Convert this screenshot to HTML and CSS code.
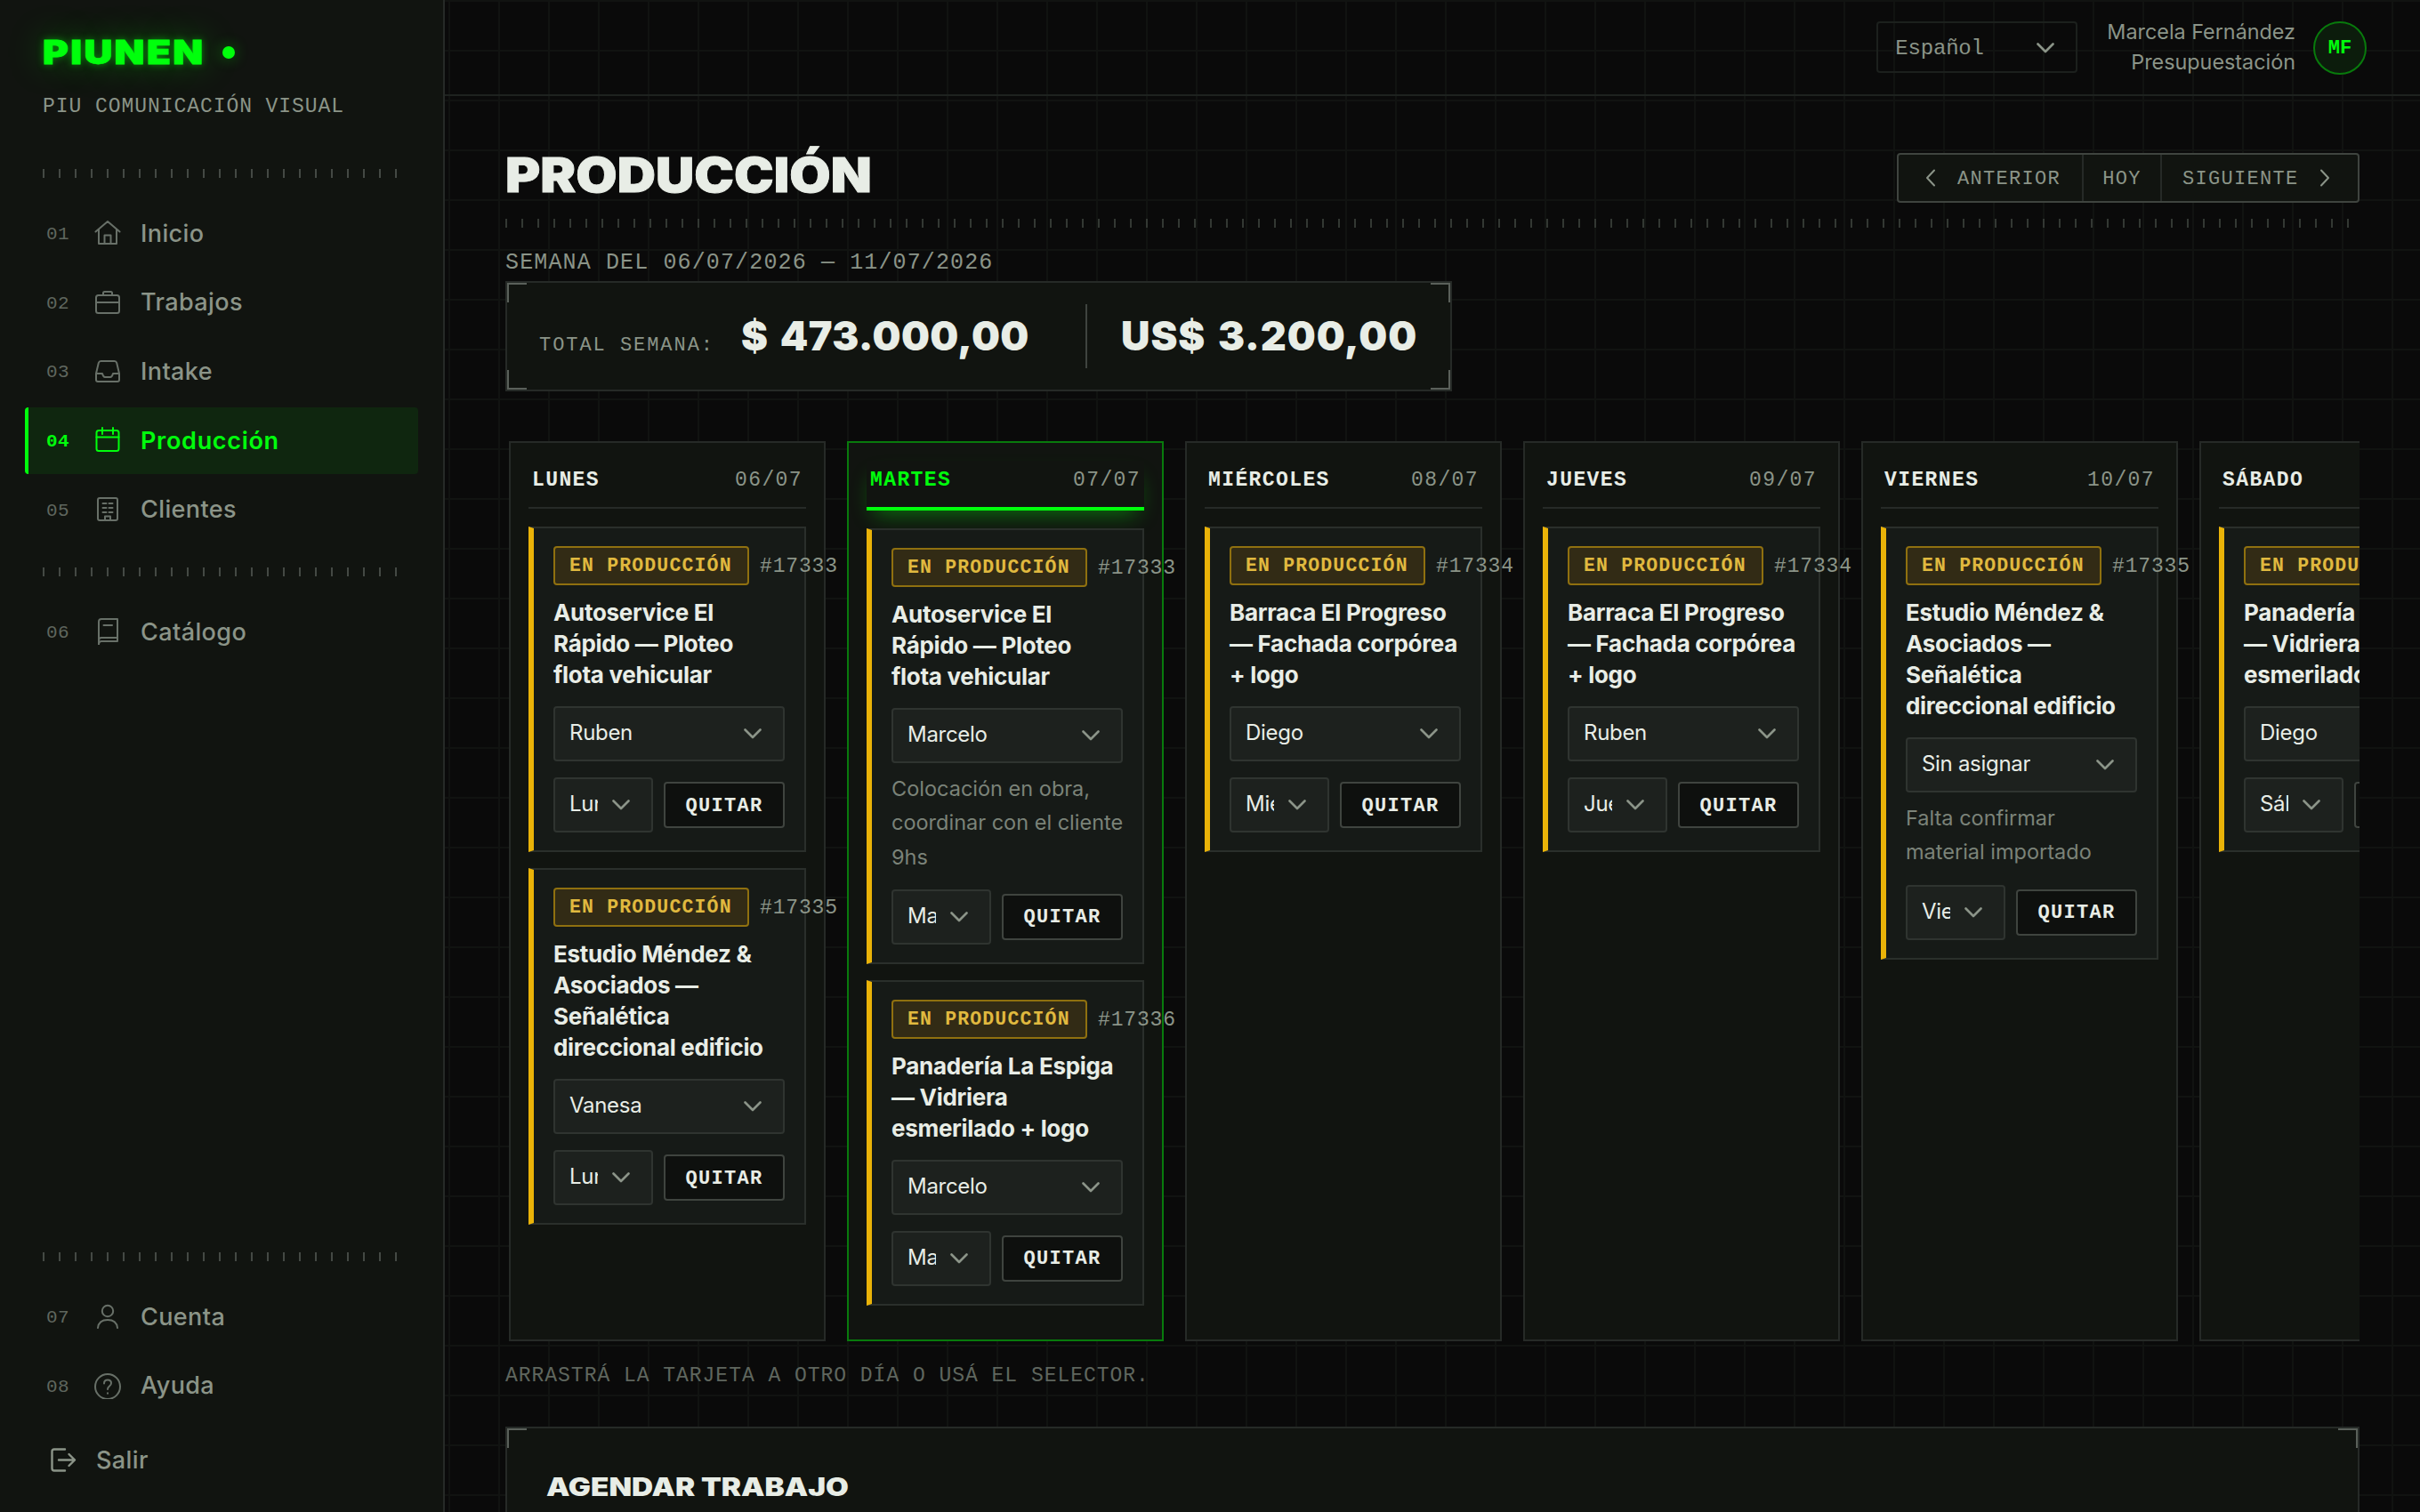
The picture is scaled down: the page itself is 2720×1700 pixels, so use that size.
FILE: index.html
```html
<!DOCTYPE html>
<html lang="es">
<head>
  <meta charset="utf-8">
  <title>Producción</title>
  <link rel="stylesheet" href="styles.css">
</head>
<body>
<svg class="defs" width="0" height="0">
  <symbol id="chev" viewBox="0 0 20 12"><path d="M1.5 1.5 10 10l8.500-8.500"/></symbol>
</svg>

<aside class="sidebar">
  <div class="brand"><span class="brand-name">PIUNEN</span><span class="dot"></span></div>
  <div class="brand-sub">PIU COMUNICACIÓN VISUAL</div>
  <div class="ruler"></div>
  <nav>
    <a class="item"><span class="num">01</span>
      <svg class="ico" viewBox="0 0 30 30"><path d="M1.500 13.500 15 2l13.500 11.500M5 11v16h20V11M11.500 27V17.500h7V27"/></svg>Inicio</a>
    <a class="item"><span class="num">02</span>
      <svg class="ico" viewBox="0 0 30 30"><rect x="2" y="7" width="26" height="20" rx="2.500"/><path d="M10 7V4.500Q10 3 11.500 3h7Q20 3 20 4.500V7M2 15h26"/></svg>Trabajos</a>
    <a class="item"><span class="num">03</span>
      <svg class="ico" viewBox="0 0 30 30"><path d="M2 18 4.800 6Q5.400 4 7.500 4h15Q24.600 4 25.200 6L28 18v7q0 2-2 2H4q-2 0-2-2zM2 18h7q1 4 3 4h6q2 0 3-4h7"/></svg>Intake</a>
    <a class="item active"><span class="num">04</span>
      <svg class="ico" viewBox="0 0 30 30"><rect x="2.500" y="4" width="25" height="23" rx="2.500"/><path d="M2.500 11.500h25M9 1v7M21 1v7"/></svg>Producción</a>
    <a class="item"><span class="num">05</span>
      <svg class="ico" viewBox="0 0 30 30"><rect x="4" y="2" width="22" height="25" rx="2"/><path d="M9.500 8h4M16.500 8h4M9.500 13h4M16.500 13h4M9.500 18h4M16.500 18h4M12 27v-4.500h6V27"/></svg>Clientes</a>
  </nav>
  <div class="ruler"></div>
  <nav>
    <a class="item"><span class="num">06</span>
      <svg class="ico" viewBox="0 0 30 30"><path d="M5 30V4q0-3 3-3h18v25H8q-3 0-3 4M5 25q0-3 3-3h18M10.500 8H20"/></svg>Catálogo</a>
  </nav>
  <div class="spacer"></div>
  <div class="ruler"></div>
  <nav>
    <a class="item"><span class="num">07</span>
      <svg class="ico" viewBox="0 0 30 30"><circle cx="15" cy="9" r="6.200"/><path d="M4 28q1-9 11-9t11 9"/></svg>Cuenta</a>
    <a class="item"><span class="num">08</span>
      <svg class="ico" viewBox="0 0 30 30"><circle cx="15" cy="16" r="14"/><path d="M11 12.500q0-4 4-4t4 3.500q0 2-2 3.500t-2 3.500M15 23.200v.6"/></svg>Ayuda</a>
    <a class="item logout">
      <svg class="ico" viewBox="0 0 30 30"><path d="M17 2.500H5Q2.500 2.500 2.500 5v19q0 2.500 2.500 2.500h12M10 14.500h18M21.500 8l6.500 6.500-6.500 6.500"/></svg>Salir</a>
  </nav>
</aside>

<div class="page">
  <header class="topbar">
    <div class="lang">Español<svg class="chev"><use href="#chev"/></svg></div>
    <div class="user">Marcela Fernández<br>Presupuestación</div>
    <div class="avatar">MF</div>
  </header>

  <main class="content">
    <div class="head">
      <h1>PRODUCCIÓN</h1>
      <div class="pager">
        <a class="prev"><svg viewBox="0 0 12 20"><path d="M10 1.500 2 10l8 8.500"/></svg>ANTERIOR</a>
        <a class="today-btn">HOY</a>
        <a class="next">SIGUIENTE<svg viewBox="0 0 12 20"><path d="M2 1.500 10 10l-8 8.500"/></svg></a>
      </div>
    </div>
    <div class="ruler wide"></div>
    <div class="week">SEMANA DEL 06/07/2026 — 11/07/2026</div>

    <section class="total corners">
      <i class="c tl"></i><i class="c tr"></i><i class="c bl"></i><i class="c br"></i>
      <span class="label">TOTAL SEMANA:</span>
      <span class="money ars">$ 473.000,00</span>
      <span class="bar"></span>
      <span class="money usd">US$ 3.200,00</span>
    </section>

    <section class="board">
      <div class="col">
        <div class="col-head"><b>LUNES</b><span>06/07</span></div>
        <article class="card">
          <div class="meta"><span class="badge">EN PRODUCCIÓN</span><span class="id">#17333</span></div>
          <h3>Autoservice El<br>Rápido — Ploteo<br>flota vehicular</h3>
          <div class="select"><span>Ruben</span><svg class="chev"><use href="#chev"/></svg></div>
          <div class="actions"><div class="select"><span>Lunes</span><svg class="chev"><use href="#chev"/></svg></div><button>QUITAR</button></div>
        </article>
        <article class="card">
          <div class="meta"><span class="badge">EN PRODUCCIÓN</span><span class="id">#17335</span></div>
          <h3>Estudio Méndez &amp;<br>Asociados —<br>Señalética<br>direccional edificio</h3>
          <div class="select"><span>Vanesa</span><svg class="chev"><use href="#chev"/></svg></div>
          <div class="actions"><div class="select"><span>Lunes</span><svg class="chev"><use href="#chev"/></svg></div><button>QUITAR</button></div>
        </article>
      </div>

      <div class="col today">
        <div class="col-head"><b>MARTES</b><span>07/07</span></div>
        <article class="card">
          <div class="meta"><span class="badge">EN PRODUCCIÓN</span><span class="id">#17333</span></div>
          <h3>Autoservice El<br>Rápido — Ploteo<br>flota vehicular</h3>
          <div class="select"><span>Marcelo</span><svg class="chev"><use href="#chev"/></svg></div>
          <p class="note">Colocación en obra,<br>coordinar con el cliente<br>9hs</p>
          <div class="actions"><div class="select"><span>Martes</span><svg class="chev"><use href="#chev"/></svg></div><button>QUITAR</button></div>
        </article>
        <article class="card">
          <div class="meta"><span class="badge">EN PRODUCCIÓN</span><span class="id">#17336</span></div>
          <h3>Panadería La Espiga<br>— Vidriera<br>esmerilado + logo</h3>
          <div class="select"><span>Marcelo</span><svg class="chev"><use href="#chev"/></svg></div>
          <div class="actions"><div class="select"><span>Martes</span><svg class="chev"><use href="#chev"/></svg></div><button>QUITAR</button></div>
        </article>
      </div>

      <div class="col">
        <div class="col-head"><b>MIÉRCOLES</b><span>08/07</span></div>
        <article class="card">
          <div class="meta"><span class="badge">EN PRODUCCIÓN</span><span class="id">#17334</span></div>
          <h3>Barraca El Progreso<br>— Fachada corpórea<br>+ logo</h3>
          <div class="select"><span>Diego</span><svg class="chev"><use href="#chev"/></svg></div>
          <div class="actions"><div class="select"><span>Miércoles</span><svg class="chev"><use href="#chev"/></svg></div><button>QUITAR</button></div>
        </article>
      </div>

      <div class="col">
        <div class="col-head"><b>JUEVES</b><span>09/07</span></div>
        <article class="card">
          <div class="meta"><span class="badge">EN PRODUCCIÓN</span><span class="id">#17334</span></div>
          <h3>Barraca El Progreso<br>— Fachada corpórea<br>+ logo</h3>
          <div class="select"><span>Ruben</span><svg class="chev"><use href="#chev"/></svg></div>
          <div class="actions"><div class="select"><span>Jueves</span><svg class="chev"><use href="#chev"/></svg></div><button>QUITAR</button></div>
        </article>
      </div>

      <div class="col">
        <div class="col-head"><b>VIERNES</b><span>10/07</span></div>
        <article class="card">
          <div class="meta"><span class="badge">EN PRODUCCIÓN</span><span class="id">#17335</span></div>
          <h3>Estudio Méndez &amp;<br>Asociados —<br>Señalética<br>direccional edificio</h3>
          <div class="select"><span>Sin asignar</span><svg class="chev"><use href="#chev"/></svg></div>
          <p class="note">Falta confirmar<br>material importado</p>
          <div class="actions"><div class="select"><span>Viernes</span><svg class="chev"><use href="#chev"/></svg></div><button>QUITAR</button></div>
        </article>
      </div>

      <div class="col">
        <div class="col-head"><b>SÁBADO</b><span>11/07</span></div>
        <article class="card">
          <div class="meta"><span class="badge">EN PRODUCCIÓN</span><span class="id">#17336</span></div>
          <h3>Panadería La Espiga<br>— Vidriera<br>esmerilado + logo</h3>
          <div class="select"><span>Diego</span><svg class="chev"><use href="#chev"/></svg></div>
          <div class="actions"><div class="select"><span>Sábado</span><svg class="chev"><use href="#chev"/></svg></div><button>QUITAR</button></div>
        </article>
      </div>
    </section>

    <div class="hint">ARRASTRÁ LA TARJETA A OTRO DÍA O USÁ EL SELECTOR.</div>

    <section class="panel corners">
      <i class="c tl"></i><i class="c tr"></i>
      <h2>AGENDAR TRABAJO</h2>
    </section>
  </main>
</div>
</body>
</html>
```

FILE: styles.css
```css
:root{
  --bg: #0a0a0a;
  --surface: #111410;
  --card: #161a17;
  --field: #1d211e;
  --line: #262a27;
  --line2: #3f443f;
  --text: #e8ede6;
  --muted: #8b9488;
  --dim: #5f665e;
  --green: #00ff0c;
  --amber: #eab308;
  --mono: "Liberation Mono", monospace;
  --sans: Inter, "Liberation Sans", sans-serif;
}

*{ box-sizing: border-box; }

body{
  margin: 0;
  height: 1700px;
  overflow: hidden;
  display: flex;
  font-family: var(--sans);
  color: var(--text);
  background-color: var(--bg);
  background-image:
    linear-gradient(to right, #111311 2px, transparent 2px),
    linear-gradient(to bottom, #111311 2px, transparent 2px);
  background-size: 56px 56px;
}

h1, h2, h3, p{ margin: 0; }

svg{
  fill: none;
  stroke: currentColor;
  stroke-width: 2;
  stroke-linecap: round;
  stroke-linejoin: round;
  flex: none;
}
.defs{ position: absolute; }

.chev{
  width: 20px;
  height: 12px;
  color: var(--muted);
  stroke-width: 2.600;
}

/* sidebar */
.sidebar{
  width: 500px;
  height: 1700px;
  flex: none;
  display: flex;
  flex-direction: column;
  padding: 36px 28px 14px;
  background: var(--surface);
  border-right: 2px solid var(--line);
}
.brand{
  display: flex;
  align-items: center;
  height: 45px;
  padding-left: 20px;
}
.brand-name{
  flex: none;
  width: 202px;
  font-size: 37px;
  font-weight: 900;
  letter-spacing: 2px;
  color: var(--green);
  -webkit-text-stroke: .8px var(--green);
  text-shadow: 0 0 8px rgba(0,255,12,.5), 0 0 36px rgba(0,255,12,.35);
  transform: scaleX(1.19);
  transform-origin: left;
}
.dot{
  width: 14px;
  height: 14px;
  border-radius: 50%;
  background: var(--green);
  box-shadow: 0 0 16px rgba(0,255,12,.4);
}
.brand-sub{
  margin: 24px 0 55px;
  padding-left: 20px;
  font: 23px/30px var(--mono);
  letter-spacing: .94px;
  color: var(--muted);
}
.ruler{
  flex: none;
  height: 10px;
  margin: 0 20px;
  background: repeating-linear-gradient(to right, #444944 0 2px, transparent 2px 18px);
}
nav{
  display: flex;
  flex-direction: column;
  gap: 2px;
  margin: 25px 0 27px;
}
.item{
  display: flex;
  align-items: center;
  height: 75.600px;
  padding: 0 0 1px 20px;
  border-left: 4px solid transparent;
  border-radius: 4px;
  font-size: 27px;
  font-weight: 500;
  letter-spacing: .400px;
  color: var(--muted);
}
.num{
  width: 54px;
  padding-top: 3px;
  font: 21px var(--mono);
  letter-spacing: .4px;
  color: var(--dim);
}
.ico{
  width: 30px;
  height: 30px;
  margin-right: 22px;
  color: #687068;
}
.item.active{
  background: #0f260f;
  border-left-color: var(--green);
  color: var(--green);
  font-weight: 600;
  letter-spacing: .7px;
}
.active .num, .active .ico{ color: var(--green); }
.active .num{ font-weight: bold; }
.spacer{ flex: 1; }
.sidebar nav:last-child{ margin-bottom: 0; }
.logout{ padding-left: 24px; height: 88px; }
.logout .ico{ color: var(--muted); stroke-width: 2.400; }

/* top bar */
.page{
  width: 2220px;
  display: flex;
  flex-direction: column;
}
.topbar{
  display: flex;
  flex: none;
  align-items: center;
  justify-content: flex-end;
  height: 108px;
  padding-right: 60px;
  border-bottom: 2px solid #1e221f;
}
.lang{
  display: flex;
  align-items: center;
  justify-content: space-between;
  width: 226px;
  height: 58px;
  margin-right: 33px;
  padding: 2px 24px 0 19px;
  border: 2px solid #1c201d;
  border-radius: 4px;
  font: 24px var(--mono);
  letter-spacing: -.2px;
  color: var(--muted);
}
.user{
  margin-right: 20px;
  text-align: right;
  font-size: 23.350px;
  line-height: 34.300px;
  color: var(--muted);
}
.avatar{
  display: grid;
  place-items: center;
  width: 60px;
  height: 60px;
  margin-top: 2px;
  border: 2px solid #087a0c;
  border-radius: 50%;
  background: #0c1c0c;
  font: bold 22px var(--mono);
  color: var(--green);
}

/* content */
.content{
  display: flex;
  flex-direction: column;
  padding: 52px 68px 0;
}
.head{
  display: flex;
  justify-content: space-between;
  height: 86px;
  padding-top: 12px;
}
h1{
  font-size: 53px;
  line-height: 51px;
  font-weight: 900;
  -webkit-text-stroke: .8px var(--text);
  transform: scaleX(1.13);
  transform-origin: left;
}
.pager{
  display: flex;
  width: 520px;
  height: 56px;
  border: 2px solid var(--line2);
  border-radius: 4px;
  background: var(--surface);
  font: 500 22px var(--mono);
  letter-spacing: 1.300px;
  color: var(--muted);
}
.pager a{
  display: flex;
  align-items: center;
  padding-top: 3px;
}
.pager svg{ width: 12px; height: 20px; margin-top: -3px; }
.pager .prev{ width: 206px; padding-left: 30px; gap: 24px; }
.today-btn{
  width: 90px;
  justify-content: center;
  border: solid var(--line);
  border-width: 0 2px;
}
.pager .next{ padding-left: 23px; gap: 23px; }
.ruler.wide{
  margin: 0;
  background: repeating-linear-gradient(to right, #333833 0 2px, transparent 2px 18px);
}
.week{
  margin-top: 24px;
  font: 25px/32px var(--mono);
  letter-spacing: 1.130px;
  color: var(--muted);
}

.corners{
  position: relative;
  border: 2px solid var(--line);
  background: var(--surface);
}
.c{
  position: absolute;
  width: 22px;
  height: 22px;
  border: 0 solid #5a605a;
}
.tl{ top: 0; left: 0; border-width: 2px 0 0 2px; }
.tr{ top: 0; right: 0; border-width: 2px 2px 0 0; }
.bl{ bottom: 0; left: 0; border-width: 0 0 2px 2px; }
.br{ bottom: 0; right: 0; border-width: 0 2px 2px 0; }

.total{
  display: flex;
  align-items: baseline;
  width: 1064px;
  height: 124px;
  margin-top: 4px;
  padding: 24px 36px;
}
.label{
  width: 227px;
  font: 22px var(--mono);
  letter-spacing: 1.950px;
  color: var(--muted);
}
.money{
  font-size: 45px;
  line-height: 72px;
  font-weight: 900;
  letter-spacing: .4px;
  word-spacing: 4px;
  white-space: nowrap;
}
.ars{ width: 387px; }
.usd{ letter-spacing: .9px; }
.bar{
  align-self: stretch;
  width: 2px;
  margin-right: 38px;
  background: var(--line2);
}

/* board */
.board{
  display: flex;
  gap: 24px;
  margin-top: 52px;
  padding: 4px;
  overflow: hidden;
}
.col{
  flex: none;
  width: 356px;
  height: 1012px;
  padding: 20px;
  border: 2px solid var(--line);
  background: var(--surface);
}
.col-head{
  display: flex;
  justify-content: space-between;
  height: 54px;
  margin-bottom: 20px;
  padding: 0 4px;
  border-bottom: 2px solid var(--line);
  font: 23px/44px var(--mono);
  letter-spacing: 1.400px;
}
.col-head span{ color: var(--muted); }
.today{ border-color: #087a0c; }
.today .col-head{
  height: 56px;
  border-bottom: 4px solid var(--green);
  box-shadow: 0 12px 24px -8px rgba(0,255,12,.4);
}
.today .col-head b{ color: var(--green); }

.card{
  margin-bottom: 18px;
  padding: 20px 22px;
  border: 2px solid #2a2f2b;
  border-left: 6px solid var(--amber);
  background: var(--card);
}
.meta{
  display: flex;
  align-items: center;
  gap: 12px;
  height: 44px;
  white-space: nowrap;
}
.badge{
  flex: none;
  width: 220px;
  height: 44px;
  padding-left: 16px;
  border: 2px solid #8f700f;
  border-radius: 4px;
  background: #322b15;
  font: bold 21.500px/40px var(--mono);
  letter-spacing: 1.150px;
  color: #e0b93f;
}
.id{
  padding-top: 2px;
  font: 23px/46px var(--mono);
  letter-spacing: .850px;
  color: var(--muted);
}
h3{
  margin: 13px 0 18px;
  font-size: 26px;
  line-height: 35px;
  font-weight: 650;
  letter-spacing: -.300px;
  white-space: nowrap;
}
.select{
  display: flex;
  align-items: center;
  justify-content: space-between;
  height: 62px;
  padding: 0 24px 0 16px;
  border: 2px solid #2f3430;
  border-radius: 4px;
  background: var(--field);
  font-size: 24px;
  letter-spacing: -.3px;
}
.select span{
  overflow: hidden;
  white-space: nowrap;
  line-height: 40px;
  margin-top: -2px;
}
.note{
  margin: 10px 0 -1px;
  font-size: 23.500px;
  line-height: 38.300px;
  color: #7b8379;
  white-space: nowrap;
}
.actions{
  display: flex;
  align-items: center;
  gap: 12px;
  margin-top: 18px;
}
.actions .select{ width: 112px; }
.actions .select span{ width: 32px; }
button{
  width: 136px;
  height: 52px;
  padding: 2px 0 0;
  border: 2px solid var(--line2);
  border-radius: 4px;
  background: #0e100e;
  font: bold 22px var(--mono);
  letter-spacing: 1.300px;
  color: var(--text);
}

.hint{
  margin-top: 18px;
  font: 23px/34px var(--mono);
  letter-spacing: .970px;
  color: var(--dim);
}
.panel{
  height: 240px;
  margin-top: 40px;
  padding: 46px 44px;
}
h2{
  width: 300px;
  font-size: 28px;
  line-height: 40px;
  font-weight: 900;
  white-space: nowrap;
  transform: scaleX(1.19);
  transform-origin: left;
}
```
